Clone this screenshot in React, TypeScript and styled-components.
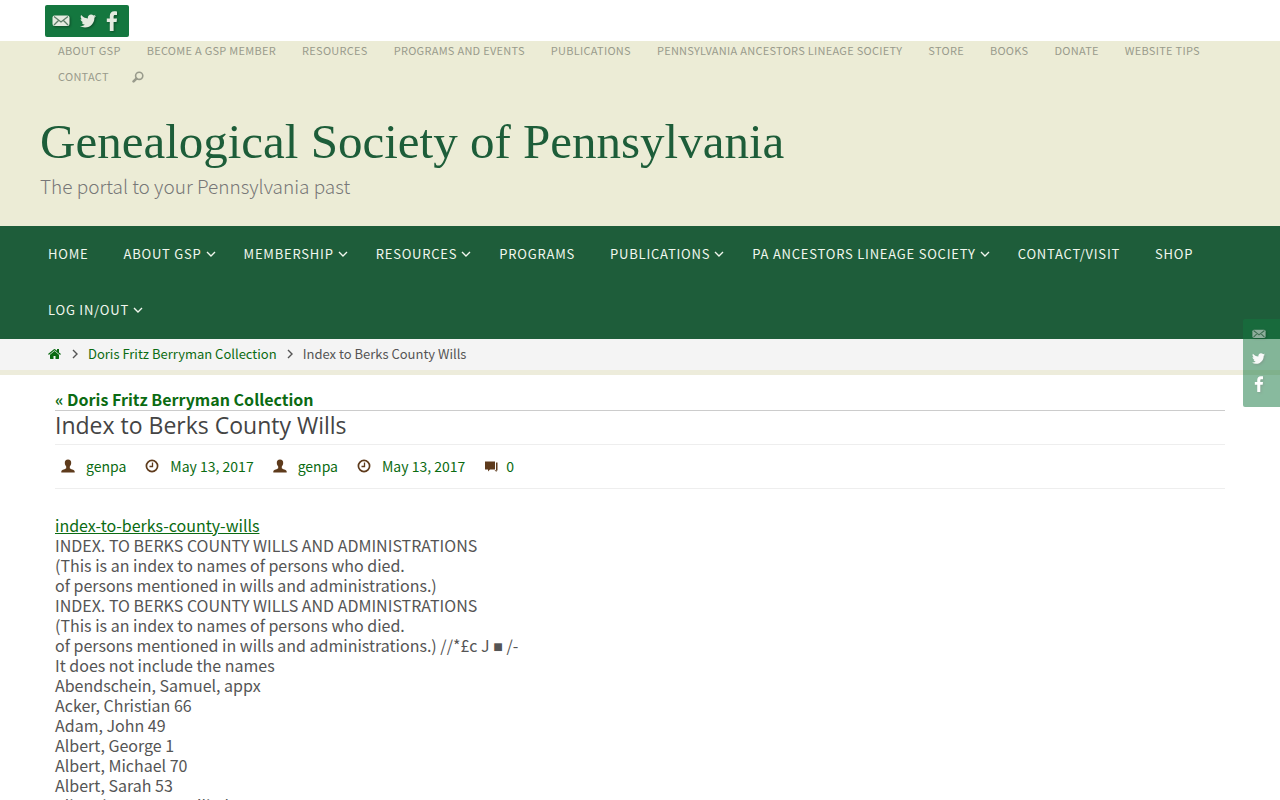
import React from "react";
import styled, { createGlobalStyle } from "styled-components";
import { FaTwitter } from "react-icons/fa";

const sans = '"Source Sans Pro", "Noto Sans CJK SC", "Noto Sans", sans-serif';

const GlobalStyle = createGlobalStyle`
  * { box-sizing: border-box; }
  body {
    margin: 0;
    background: #fff;
    color: #555;
    font-family: ${sans};
    font-size: 16px;
    line-height: 20px;
  }
  a { color: #0b6b12; text-decoration: none; }
  ul { list-style: none; margin: 0; padding: 0; }
  svg { display: block; }
`;

const Container = styled.div`
  max-width: 1200px;
  margin: 0 auto;
`;

const TopBar = styled.div`
  padding: 5px 0 4px;
`;

const TopSocials = styled.div`
  display: inline-flex;
  align-items: center;
  vertical-align: top;
  gap: 10px;
  height: 32px;
  margin-left: 5px;
  padding: 0 11px 0 7px;
  border-radius: 2px;
  background: #14773f;
`;

const SocialLink = styled.a`
  display: flex;
  color: #e4ebe0;
  filter: drop-shadow(1px 1px 1px rgba(0, 0, 0, 0.35));
`;

const SideSocials = styled.div`
  position: absolute;
  top: 319px;
  right: 0;
  display: flex;
  flex-direction: column;
  align-items: center;
  gap: 11px;
  width: 37px;
  height: 88px;
  padding: 8px 6px 0 0;
  border-radius: 2px 0 0 2px;
  background: #14773f;
  opacity: 0.5;
  a { color: #fff; }
`;

const Header = styled.header`
  background: #ececd6;
`;

const TopMenu = styled.ul`
  display: flex;
  flex-wrap: wrap;
  row-gap: 8px;
  padding-left: 5px;
  font-size: 11px;
  letter-spacing: 0.025em;
  line-height: 18px;
  text-transform: uppercase;
  li { padding: 0 13px; }
  a { color: #999b8c; }
`;

const SearchItem = styled.li`
  && { padding: 0 10px; }
`;

const SearchButton = styled.button`
  display: flex;
  align-items: center;
  height: 18px;
  padding: 2px 0 0;
  border: 0;
  background: none;
  color: #999b8c;
`;

const Branding = styled.div`
  padding: 27px 0 27px;
`;

const SiteTitle = styled.h1`
  margin: 0 0 1px;
  font-family: Georgia, "Liberation Serif", serif;
  font-size: 49px;
  font-weight: 400;
  line-height: 60px;
  a { color: #1d5d39; }
`;

const Tagline = styled.p`
  margin: 0;
  color: #777;
  font-size: 19px;
  font-weight: 300;
  line-height: 26px;
`;

const MainNav = styled.nav`
  background: #1e5d3a;
  padding-bottom: 1px;
`;

const NavList = styled.ul`
  display: flex;
  flex-wrap: wrap;
  padding-left: 8px;
`;

const NavLink = styled.a<{ $sub?: boolean }>`
  display: flex;
  align-items: center;
  gap: 4px;
  height: 56px;
  margin-right: ${(p) => (p.$sub ? 28 : 35)}px;
  color: #f1f7ee;
  font-size: 13px;
  letter-spacing: 0.06em;
  text-transform: uppercase;
`;

const Crumbs = styled.nav`
  background: #f4f4f4;
  border-bottom: 5px solid #edecdb;
`;

const CrumbRow = styled.div`
  display: flex;
  align-items: center;
  gap: 8px;
  height: 31px;
  padding: 0 0 2px 8px;
  font-size: 13px;
`;

const Content = styled.main`
  padding: 15px 15px 40px;
`;

const ParentLink = styled.p`
  margin: 0;
  padding-bottom: 2px;
  border-bottom: 1px solid #ccc;
  font-weight: 700;
  line-height: 18px;
`;

const PostTitle = styled.h2`
  margin: 0;
  padding-bottom: 5px;
  border-bottom: 1px solid #eee;
  color: #444;
  font-family: "Trebuchet MS", "Open Sans", sans-serif;
  font-size: 23px;
  font-weight: 400;
  line-height: 28px;
`;

const Meta = styled.div`
  display: flex;
  align-items: center;
  gap: 19px;
  height: 44px;
  padding: 0 0 1px 6px;
  border-bottom: 1px solid #eee;
  font-size: 14px;
`;

const MetaItem = styled.span`
  display: flex;
  align-items: center;
  gap: 11px;
  svg { color: #5e3b1c; }
`;

const CommentItem = styled(MetaItem)`
  gap: 8px;
`;

const Body = styled.p`
  margin: 26px 0 0;
  a { text-decoration: underline; }
`;

const Bullet = styled.span`
  font-family: "Liberation Sans", sans-serif;
  line-height: 1px;
`;

const MailIcon = ({ size }: { size: number }) => (
  <svg width={size} height={size} viewBox="0 0 18 18" fill="none" stroke="#5d7d68">
    <rect x="0.5" y="3.5" width="17" height="10.5" rx="2" fill="currentColor" stroke="none" />
    <path d="M2 4.500l7 5.500 7-5.500M2 13l4.500-4.500M16 13l-4.500-4.500" strokeWidth="1.300" />
  </svg>
);

const FacebookIcon = ({ height }: { height: number }) => (
  <svg width={height / 2 + 2} height={height} viewBox="0 0 12 20" fill="currentColor">
    <path d="M11 .4V4H9.200C7.900 4 7.600 4.600 7.600 5.600V7.500H11l-.4 3.500H7.600V20H3.800V11H.8V7.500h3V4.900C3.800 1.900 5.600.2 8.300.2c1.300 0 2.400.1 2.700.2z" />
  </svg>
);

const SearchIcon = () => (
  <svg width="12" height="12" viewBox="0 0 12 12" fill="none" stroke="currentColor">
    <circle cx="7.2" cy="4.8" r="3.6" strokeWidth="1.6" />
    <path d="M4.4 7.6L1.6 10.4" strokeWidth="2.6" strokeLinecap="round" />
  </svg>
);

const Chevron = ({ dir }: { dir: "down" | "right" }) => (
  <svg width="10" height="10" viewBox="0 0 10 10" fill="none" stroke="currentColor" strokeWidth="1.4">
    <path d={dir === "down" ? "M1 3l4 4 4-4" : "M3 1l4 4-4 4"} />
  </svg>
);

const HomeIcon = () => (
  <svg width="14" height="14" viewBox="0 0 1792 1792" fill="currentColor">
    <path d="M1408 992v480q0 26-19 45t-45 19h-384v-384h-256v384h-384q-26 0-45-19t-19-45v-480q0-1 .5-3t.5-3l575-474 575 474q1 2 1 6zm223-69l-62 74q-8 9-21 11h-3q-13 0-21-7l-692-577-692 577q-12 8-24 7-13-2-21-11l-62-74q-8-10-7-23.5t11-21.5l719-599q32-26 76-26t76 26l244 204v-195q0-14 9-23t23-9h192q14 0 23 9t9 23v408l219 182q10 8 11 21.5t-7 23.5z" />
  </svg>
);

const UserIcon = () => (
  <svg width="14" height="14" viewBox="0 0 14 14" fill="currentColor">
    <path d="M7 .5C9.200.5 10.300 2 10.200 4c-.1 1.700-.7 2.700-1.400 3.400v1.800c.3.900 4.700 1.300 4.900 3.300V13.500H.3V12.500c.2-2 4.600-2.400 4.900-3.300V7.400C4.500 6.700 3.900 5.700 3.800 4 3.700 2 4.800.5 7 .5z" />
  </svg>
);

const ClockIcon = () => (
  <svg width="14" height="14" viewBox="0 0 14 14" fill="none" stroke="currentColor">
    <circle cx="7" cy="7" r="5.600" strokeWidth="1.700" />
    <path d="M7.500 3.500v4H4.500" strokeWidth="1.300" />
  </svg>
);

const CommentIcon = () => (
  <svg width="14" height="14" viewBox="0 0 14 14" fill="currentColor">
    <path d="M1 2.500h10v8H6L4 12.500V10.500H1z" />
    <path d="M12 3.500h1.500v8h-1V13l-2-1.800H12z" />
  </svg>
);

const Socials = ({ mail, bird, f }: { mail: number; bird: number; f: number }) => (
  <>
    <SocialLink href="#mail" aria-label="Mail"><MailIcon size={mail} /></SocialLink>
    <SocialLink href="#twitter" aria-label="Twitter"><FaTwitter size={bird} /></SocialLink>
    <SocialLink href="#facebook" aria-label="Facebook"><FacebookIcon height={f} /></SocialLink>
  </>
);

const topLinks = [
  "About GSP", "Become a GSP Member", "Resources", "Programs and Events", "Publications",
  "Pennsylvania Ancestors Lineage Society", "Store", "Books", "Donate", "Website Tips", "Contact",
];

const navLinks: { label: string; sub?: boolean }[] = [
  { label: "Home" },
  { label: "About GSP", sub: true },
  { label: "Membership", sub: true },
  { label: "Resources", sub: true },
  { label: "Programs" },
  { label: "Publications", sub: true },
  { label: "PA Ancestors Lineage Society", sub: true },
  { label: "Contact/Visit" },
  { label: "Shop" },
  { label: "Log In/Out", sub: true },
];

const lines: React.ReactNode[] = [
  "INDEX. TO BERKS COUNTY WILLS AND ADMINISTRATIONS",
  "(This is an index to names of persons who died.",
  "of persons mentioned in wills and administrations.)",
  "INDEX. TO BERKS COUNTY WILLS AND ADMINISTRATIONS",
  "(This is an index to names of persons who died.",
  <>of persons mentioned in wills and administrations.) //*£c J <Bullet>■</Bullet> /-</>,
  "It does not include the names",
  "Abendschein, Samuel, appx",
  "Acker, Christian 66",
  "Adam, John 49",
  "Albert, George 1",
  "Albert, Michael 70",
  "Albert, Sarah 53",
  "Albrecht, George Wilhelm 34",
];

export default function App() {
  return (
    <>
      <GlobalStyle />
      <TopBar>
        <Container>
          <TopSocials><Socials mail={18} bird={16} f={20} /></TopSocials>
        </Container>
      </TopBar>
      <Header>
        <Container>
          <TopMenu>
            {topLinks.map((label) => (
              <li key={label}><a href="#menu">{label}</a></li>
            ))}
            <SearchItem>
              <SearchButton aria-label="Search"><SearchIcon /></SearchButton>
            </SearchItem>
          </TopMenu>
          <Branding>
            <SiteTitle><a href="#home">Genealogical Society of Pennsylvania</a></SiteTitle>
            <Tagline>The portal to your Pennsylvania past</Tagline>
          </Branding>
        </Container>
      </Header>
      <MainNav aria-label="Main">
        <Container>
          <NavList>
            {navLinks.map(({ label, sub }) => (
              <li key={label}>
                <NavLink href="#nav" $sub={sub}>
                  {label}
                  {sub && <Chevron dir="down" />}
                </NavLink>
              </li>
            ))}
          </NavList>
        </Container>
      </MainNav>
      <Crumbs aria-label="Breadcrumb">
        <Container>
          <CrumbRow>
            <a href="#home" aria-label="Home"><HomeIcon /></a>
            <Chevron dir="right" />
            <a href="#collection">Doris Fritz Berryman Collection</a>
            <Chevron dir="right" />
            <span>Index to Berks County Wills</span>
          </CrumbRow>
        </Container>
      </Crumbs>
      <Container>
        <Content>
          <ParentLink><a href="#collection">« Doris Fritz Berryman Collection</a></ParentLink>
          <PostTitle>Index to Berks County Wills</PostTitle>
          <Meta>
            <MetaItem><UserIcon /><a href="#author">genpa</a></MetaItem>
            <MetaItem><ClockIcon /><a href="#date">May 13, 2017</a></MetaItem>
            <MetaItem><UserIcon /><a href="#author">genpa</a></MetaItem>
            <MetaItem><ClockIcon /><a href="#date">May 13, 2017</a></MetaItem>
            <CommentItem><CommentIcon /><a href="#comments">0</a></CommentItem>
          </Meta>
          <Body>
            <a href="#document">index-to-berks-county-wills</a>
            {lines.map((line, i) => (
              <React.Fragment key={i}><br />{line}</React.Fragment>
            ))}
          </Body>
        </Content>
      </Container>
      <SideSocials><Socials mail={14} bird={13} f={16} /></SideSocials>
    </>
  );
}
